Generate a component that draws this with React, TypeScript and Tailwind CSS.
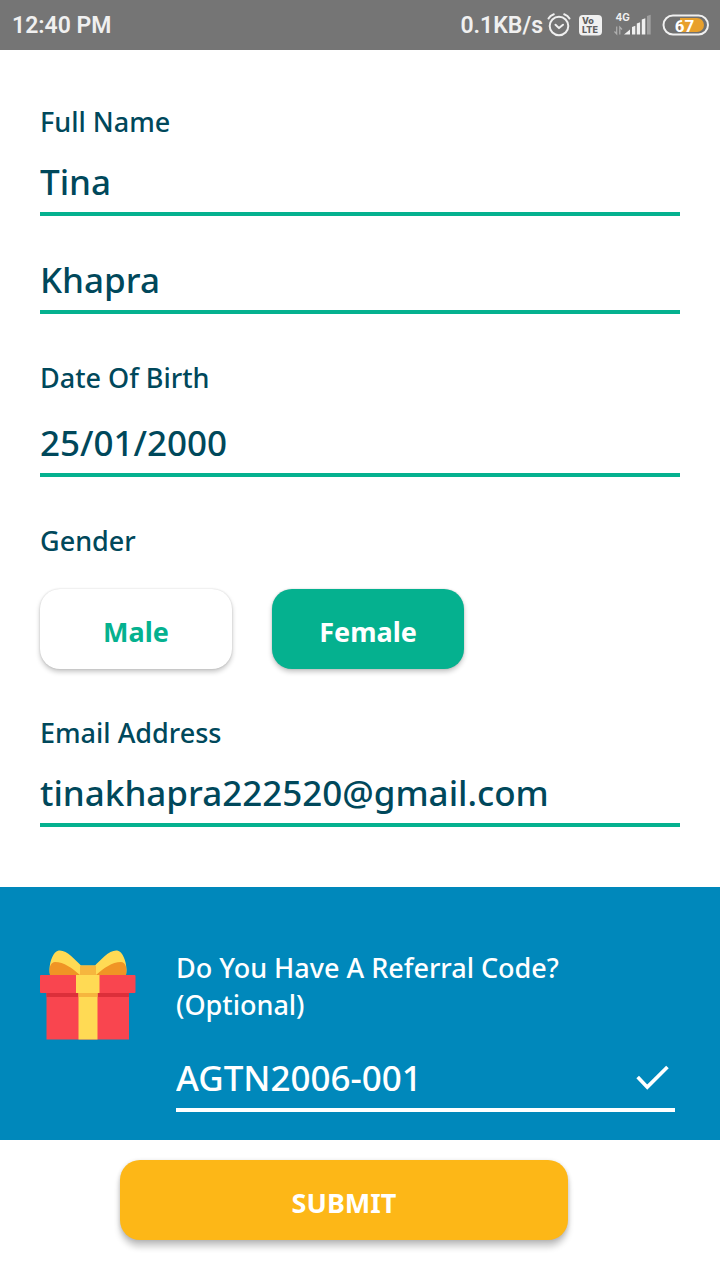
import React, { useState } from "react";

const labelClass = "block text-[27px] leading-9 font-medium";
const inputClass =
  "block h-16 w-full min-w-0 border-b-4 bg-transparent pb-0.5 text-[35px] font-medium outline-none";

function AlarmIcon() {
  return (
    <svg width="24" height="26" viewBox="0 0 24 26" fill="none" stroke="#f0f0f0" strokeWidth="2" strokeLinecap="round" strokeLinejoin="round" aria-hidden="true">
      <circle cx="12" cy="14" r="9.3" />
      <path d="M1.5 6.5Q3 3.5 6.8 2.2M22.5 6.5Q21 3.5 17.2 2.2M8.5 12.7l3.5 3.4 4-3.4" />
    </svg>
  );
}

function VolteIcon() {
  return (
    <svg width="23" height="22" viewBox="0 0 23 22" aria-hidden="true">
      <rect width="23" height="20.5" y="1" rx="4" fill="#f0f0f0" />
      <text x="3" y="10" fontSize="9" fontWeight="800" fill="#5f5f5f" fontFamily="Inter, sans-serif">Vo</text>
      <text x="3" y="19" fontSize="9" fontWeight="800" fill="#5f5f5f" fontFamily="Inter, sans-serif">LTE</text>
    </svg>
  );
}

function SignalIcon() {
  return (
    <svg width="40" height="26" viewBox="0 0 40 26" aria-hidden="true">
      <text x="1.500" y="8.500" fontSize="10" fontWeight="700" fill="#f0f0f0" fontFamily="Inter, sans-serif">4G</text>
      <path d="M2.700 14.500v7.500L.5 19.500M5.800 22.500v-7.500L8 17.500" fill="none" stroke="#b0b0b0" strokeWidth="1.2" />
      <path d="M10 22.500l6-5v5zM18 15l3.300-1.200v8.700H18zM22.800 11.500l3.300-1.200v12.200h-3.300zM27.800 7.500l3.500-1.300v16.300h-3.500z" fill="#f0f0f0" />
      <path d="M33 4l3.700-1.200v19.700H33z" fill="#a0a0a0" />
    </svg>
  );
}

function BatteryIcon() {
  return (
    <svg width="47" height="22" viewBox="0 0 47 22" aria-hidden="true">
      <rect x="1.500" y="1.500" width="44.500" height="19" rx="9.500" fill="#707070" stroke="#f0f0f0" strokeWidth="2" />
      <path d="M18 4h17a7 7 0 0 1 0 14H18z" fill="#e8a02c" />
      <text x="22.500" y="17.500" textAnchor="middle" fontSize="17" fontWeight="700" fill="#ffffff" fontFamily="Roboto, sans-serif">67</text>
    </svg>
  );
}

function GiftIcon() {
  return (
    <svg className="mt-px shrink-0" width="96" height="90" viewBox="0 0 96 90" aria-hidden="true">
      <path d="M10 25C8 14 13 2 18 .8 26-1 35 10 41 15.500h14C61 10 70-1 78 .8 83 2 88 14 86 25z" fill="#ffda54" />
      <path d="M10 25c-1.500-8 1-13 5-13 9 0 17 6 25 13zM86 25c1.500-8-1-13-5-13-9 0-17 6-25 13z" fill="#f09425" />
      <path d="M40 15.500h16V27H40z" fill="#f6b63e" />
      <path d="M6.500 42h82.500v47.500H6.500z" fill="#f9454f" />
      <path d="M6.500 42h82.500v5H6.500z" fill="#dc2f3a" />
      <rect y="25" width="95.500" height="18" rx="1" fill="#f9454f" />
      <path d="M38.500 42h19v47.500h-19z" fill="#ffda54" />
      <path d="M38.500 42h19v5h-19z" fill="#f6b63e" />
      <path d="M36 25h23.500v18H36z" fill="#ffda54" />
    </svg>
  );
}

export default function App() {
  const [gender, setGender] = useState("Female");

  return (
    <div className="min-h-screen bg-white font-['Noto_Sans',sans-serif] text-[#00485b]">
      <header className="flex h-[50px] items-center justify-between bg-[#757575] pr-[11px] pl-3 font-['Roboto',sans-serif] text-[23px] font-semibold text-[#f0f0f0]">
        <span className="pt-0.5">12:40 PM</span>
        <div className="flex items-center gap-2">
          <div className="flex items-center gap-1">
            <span className="pt-0.5">0.1KB/s</span>
            <AlarmIcon />
          </div>
          <VolteIcon />
          <div className="flex items-center gap-2 pl-1">
            <SignalIcon />
            <BatteryIcon />
          </div>
        </div>
      </header>

      <form onSubmit={(e) => e.preventDefault()}>
        <div className="flex flex-col gap-[46px] px-10 pt-[54px] pb-[60px]">
          <div>
            <label htmlFor="first" className={labelClass}>Full Name</label>
            <input id="first" defaultValue="Tina" className={`${inputClass} mt-3 border-[#05b18f]`} />
            <input aria-label="Last name" defaultValue="Khapra" className={`${inputClass} mt-[34px] border-[#05b18f]`} />
          </div>
          <div>
            <label htmlFor="dob" className={labelClass}>Date Of Birth</label>
            <input id="dob" defaultValue="25/01/2000" className={`${inputClass} mt-[17px] border-[#05b18f]`} />
          </div>
          <div role="group" aria-labelledby="gender">
            <span id="gender" className={labelClass}>Gender</span>
            <div className="mt-[30px] flex gap-10">
              {["Male", "Female"].map((option) => (
                <button
                  key={option}
                  type="button"
                  aria-pressed={gender === option}
                  onClick={() => setGender(option)}
                  className={`h-20 w-48 rounded-[20px] pt-1.5 text-[27px] font-bold shadow-[0_3px_5px_rgba(0,0,0,0.22),0_0_2px_rgba(0,0,0,0.16)] ${
                    gender === option ? "bg-[#05b18f] text-white" : "bg-white text-[#05b18f]"
                  }`}
                >
                  {option}
                </button>
              ))}
            </div>
          </div>
          <div>
            <label htmlFor="email" className={labelClass}>Email Address</label>
            <input id="email" type="email" defaultValue="tinakhapra222520@gmail.com" className={`${inputClass} mt-3 border-[#05b18f]`} />
          </div>
        </div>

        <section className="flex gap-10 bg-[#0088bb] pt-[62px] pr-[45px] pb-7 pl-10 text-white">
          <GiftIcon />
          <div className="min-w-0 grow">
            <label htmlFor="code" className="block text-[27px] leading-[37px] font-medium">
              Do You Have A Referral Code?
              <br />
              (Optional)
            </label>
            <div className="mt-[25px] flex h-16 items-center border-b-4 border-white pr-1.5">
              <input id="code" defaultValue="AGTN2006-001" className="h-full min-w-0 grow bg-transparent pb-0.5 text-[35px] font-medium outline-none" />
              <svg width="38" height="30" viewBox="0 0 38 30" fill="none" stroke="white" strokeWidth="4" aria-hidden="true">
                <path d="M4 14l10.500 11L36.500 3" />
              </svg>
            </div>
          </div>
        </section>

        <div className="pt-5 pr-[152px] pb-10 pl-[120px]">
          <button
            type="submit"
            className="h-20 w-full rounded-[20px] bg-[#fdb717] pt-1.5 text-[27px] font-bold text-white shadow-[0_7px_6px_rgba(0,0,0,0.2),0_1px_4px_rgba(0,0,0,0.16)]"
          >
            SUBMIT
          </button>
        </div>
      </form>
    </div>
  );
}
